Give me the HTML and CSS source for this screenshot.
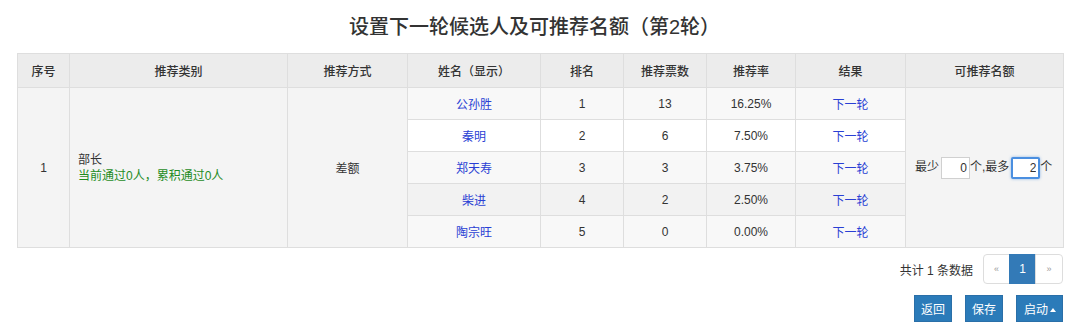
FILE: index.html
```html
<!DOCTYPE html>
<html lang="zh">
<head>
<meta charset="utf-8">
<title>设置下一轮候选人及可推荐名额</title>
<link rel="stylesheet" href="styles.css">
</head>
<body>
<div class="page">
  <h1 class="title">设置下一轮候选人及可推荐名额（第2轮）</h1>
  <table class="grid">
    <colgroup>
      <col style="width:52px"><col style="width:218px"><col style="width:120px"><col style="width:133px"><col style="width:83px"><col style="width:83px"><col style="width:89px"><col style="width:110px"><col style="width:158px">
    </colgroup>
    <thead>
      <tr>
        <th>序号</th><th>推荐类别</th><th>推荐方式</th><th>姓名（显示）</th><th>排名</th><th>推荐票数</th><th>推荐率</th><th>结果</th><th>可推荐名额</th>
      </tr>
    </thead>
    <tbody>
      <tr class="odd">
        <td rowspan="5" class="span">1</td>
        <td rowspan="5" class="span left">部长<br><span class="green">当前通过0人，累积通过0人</span></td>
        <td rowspan="5" class="span">差额</td>
        <td><a class="link">公孙胜</a></td><td>1</td><td>13</td><td>16.25%</td><td><a class="link">下一轮</a></td>
        <td rowspan="5" class="span quota">最少<input class="num" value="0">个,最多<input class="num focus" value="2">个</td>
      </tr>
      <tr class="even">
        <td><a class="link">秦明</a></td><td>2</td><td>6</td><td>7.50%</td><td><a class="link">下一轮</a></td>
      </tr>
      <tr class="odd">
        <td><a class="link">郑天寿</a></td><td>3</td><td>3</td><td>3.75%</td><td><a class="link">下一轮</a></td>
      </tr>
      <tr class="hover">
        <td><a class="link">柴进</a></td><td>4</td><td>2</td><td>2.50%</td><td><a class="link">下一轮</a></td>
      </tr>
      <tr class="odd">
        <td><a class="link">陶宗旺</a></td><td>5</td><td>0</td><td>0.00%</td><td><a class="link">下一轮</a></td>
      </tr>
    </tbody>
  </table>
  <div class="pager-row">
    <span class="total">共计 1 条数据</span>
    <ul class="pager">
      <li class="pg">«</li>
      <li class="pg active">1</li>
      <li class="pg">»</li>
    </ul>
  </div>
  <div class="actions">
    <button class="btn">返回</button>
    <button class="btn">保存</button>
    <button class="btn">启动<span class="caret"></span></button>
  </div>
</div>
</body>
</html>
```
FILE: styles.css
```css
* { box-sizing: border-box; }
body {
  margin: 0;
  background: #fff;
  font-family: "Liberation Sans", "Noto Sans CJK SC", sans-serif;
  font-size: 12px;
  color: #333;
}
.page {
  padding: 13px 17px 0 17px;
}
.title {
  margin: 0 0 12px 0;
  text-align: center;
  font-size: 20px;
  line-height: 28px;
  font-weight: 500;
  color: #333;
  padding-right: 11px;
}
.grid {
  width: 1046px;
  border-collapse: collapse;
  table-layout: fixed;
}
.grid th, .grid td {
  border: 1px solid #dedede;
  text-align: center;
  vertical-align: middle;
  padding: 0 8px;
}
.grid th {
  height: 34px;
  background: #ececec;
  font-weight: 500;
  color: #333;
}
.grid td {
  height: 32px;
}
.grid tr.odd td { background: #f8f8f8; }
.grid tr.even td { background: #fff; }
.grid tr.hover td { background: #f2f2f2; }
.grid td.span { background: #f4f4f4 !important; }
.grid td.left { text-align: left; line-height: 16px; }
.green { color: #1f8c1f; }
.link { color: #2a3fd4; text-decoration: none; }
.quota { text-align: left !important; padding: 0 0 0 9px !important; white-space: nowrap; }
.num {
  width: 29px;
  height: 22px;
  border: 1px solid #d0d0d0;
  font: inherit;
  color: #333;
  text-align: right;
  padding: 0 2px;
  margin: 0 0 0 2px;
  vertical-align: middle;
  background: #fff;
  border-radius: 0;
}
.num.focus {
  border: 2px solid #4b8fe0;
  border-radius: 2px;
  margin-left: 2px;
  outline: none;
  box-shadow: 0 0 3px rgba(75, 143, 224, 0.6);
}
.pager-row {
  display: flex;
  justify-content: flex-end;
  align-items: center;
  gap: 10px;
  margin-top: 6px;
  height: 30px;
}
.total { font-size: 12px; color: #333; }
.pager {
  display: flex;
  list-style: none;
  margin: 0;
  padding: 0;
}
.pg {
  width: 27px;
  height: 30px;
  line-height: 28px;
  text-align: center;
  border: 1px solid #ddd;
  margin-left: -1px;
  color: #999;
  font-size: 9px;
  background: #fff;
}
.pg:first-child { border-radius: 4px 0 0 4px; margin-left: 0; width: 27px; }
.pg:last-child { border-radius: 0 4px 4px 0; width: 28px; }
.pg.active {
  background: #337ab7;
  border-color: #337ab7;
  color: #fff;
  font-size: 12px;
}
.actions {
  display: flex;
  justify-content: flex-end;
  gap: 13px;
  margin-top: 11px;
}
.btn {
  height: 27px;
  padding: 0 6px;
  background: #2b7bb9;
  border: 1px solid #2a6fa8;
  color: #fff;
  font: inherit;
  font-size: 12px;
  border-radius: 0;
}
.btn:last-child { padding: 0 6px 0 7px; }
.caret {
  display: inline-block;
  width: 0;
  height: 0;
  border-left: 3px solid transparent;
  border-right: 3px solid transparent;
  border-bottom: 4px solid #fff;
  margin-left: 2px;
  vertical-align: 2px;
}
```
